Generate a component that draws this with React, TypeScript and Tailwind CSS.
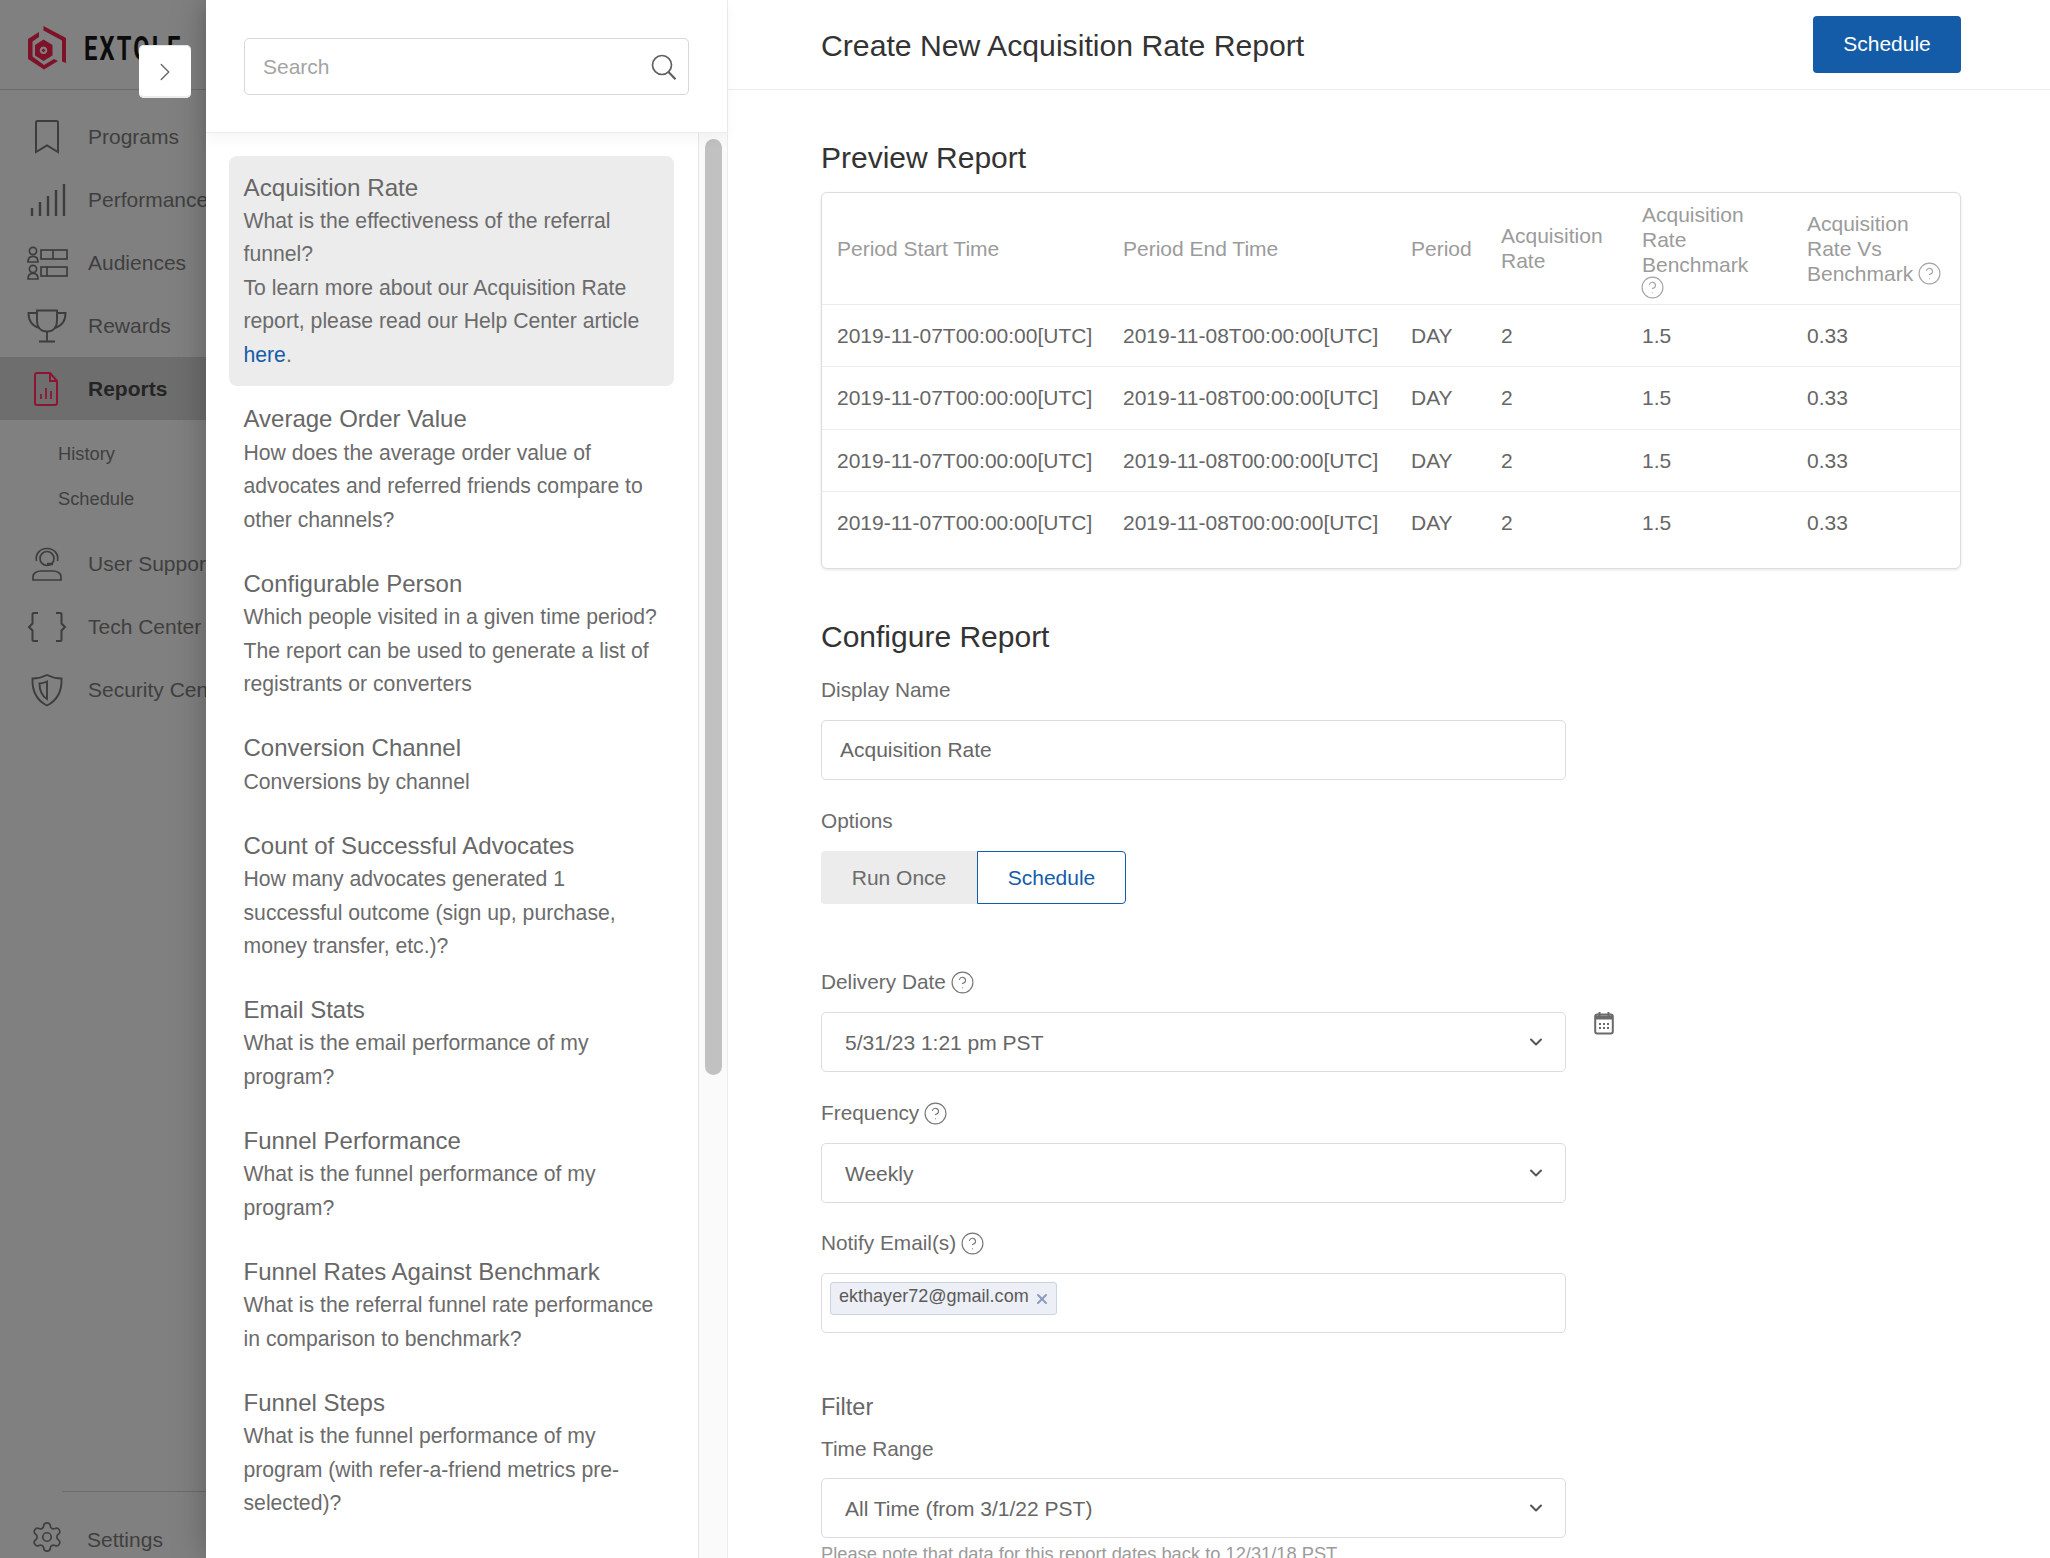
import { ChevronDown, ChevronRight, CircleHelp, Settings, X } from "lucide-react";

const reports = [
  { title: "Average Order Value", lines: ["How does the average order value of", "advocates and referred friends compare to", "other channels?"] },
  { title: "Configurable Person", lines: ["Which people visited in a given time period?", "The report can be used to generate a list of", "registrants or converters"] },
  { title: "Conversion Channel", lines: ["Conversions by channel"] },
  { title: "Count of Successful Advocates", lines: ["How many advocates generated 1", "successful outcome (sign up, purchase,", "money transfer, etc.)?"] },
  { title: "Email Stats", lines: ["What is the email performance of my", "program?"] },
  { title: "Funnel Performance", lines: ["What is the funnel performance of my", "program?"] },
  { title: "Funnel Rates Against Benchmark", lines: ["What is the referral funnel rate performance", "in comparison to benchmark?"] },
  { title: "Funnel Steps", lines: ["What is the funnel performance of my", "program (with refer-a-friend metrics pre-", "selected)?"] },
  { title: "Influencer Stats", lines: ["What is the influencer performance"] },
];

const rows = [0, 1, 2, 3];

function BookmarkIcon() {
  return (
    <svg width="42" height="34" viewBox="0 0 42 34" fill="none" stroke="#3d3d3d" strokeWidth="2">
      <path d="M10 2.5c0-1 .6-1.5 1.5-1.5h19c.9 0 1.5.5 1.5 1.5V32l-11-6.5L10 32z" />
    </svg>
  );
}

function BarsIcon() {
  return (
    <svg width="42" height="34" viewBox="0 0 42 34" fill="none" stroke="#3d3d3d" strokeWidth="2.4">
      <path d="M6 33v-8M14 33V19M22 33V13M30 33V7M38 33V1" />
    </svg>
  );
}

function AudienceIcon() {
  return (
    <svg width="42" height="34" viewBox="0 0 42 34" fill="none" stroke="#3d3d3d" strokeWidth="1.7">
      <circle cx="7" cy="5" r="3.6" />
      <path d="M2 16c0-3.4 2-5.6 5-5.6s5 2.2 5 5.6z" />
      <circle cx="7" cy="23" r="3.6" />
      <path d="M2 33c0-3.4 2-5.6 5-5.6s5 2.2 5 5.6z" />
      <rect x="15" y="4" width="26" height="9" />
      <path d="M27 4v9" />
      <rect x="15" y="21" width="26" height="9" />
      <path d="M21 21v9" />
    </svg>
  );
}

function TrophyIcon() {
  return (
    <svg width="42" height="34" viewBox="0 0 42 34" fill="none" stroke="#3d3d3d" strokeWidth="1.9">
      <path d="M11 1.5h20v10c0 7-4 11-10 11s-10-4-10-11z" />
      <path d="M11 4H2.500c0 8 3 13 11 15M31 4h8.500c0 8-3 13-11 15" />
      <path d="M21 22.500V32M13 32.500h16" />
    </svg>
  );
}

function ReportIcon() {
  return (
    <svg width="42" height="34" viewBox="0 0 42 34" fill="none" stroke="#8f1633" strokeWidth="2">
      <path d="M11 1h13l7 8v22c0 1.200-.8 2-2 2H11c-1.200 0-2-.8-2-2V3c0-1.200.8-2 2-2z" />
      <path d="M24 1v8h7" />
      <path d="M15 27v-5M20 27V16M25 27v-8" strokeWidth="1.8" />
    </svg>
  );
}

function SupportIcon() {
  return (
    <svg width="42" height="34" viewBox="0 0 42 34" fill="none" stroke="#3d3d3d" strokeWidth="1.7">
      <path d="M10.500 14C9 7 14 1.500 21 1.500S33 7 31.500 14" />
      <circle cx="21" cy="11.500" r="7" />
      <path d="M27 17h-6" strokeWidth="2.4" />
      <path d="M7 33v-3.500c0-3.500 4-5.500 8-5.500h12c4 0 8 2 8 5.500V33z" />
    </svg>
  );
}

function BracesIcon() {
  return (
    <svg width="42" height="34" viewBox="0 0 42 34" fill="none" stroke="#3d3d3d" strokeWidth="2">
      <path d="M12 3H8c-1 0-1.500.5-1.500 1.500v9L3 17l3.500 3.500v9c0 1 .5 1.500 1.500 1.500h4" />
      <path d="M30 3h4c1 0 1.500.5 1.500 1.500v9L39 17l-3.500 3.500v9c0 1-.5 1.500-1.500 1.500h-4" />
    </svg>
  );
}

function ShieldIcon() {
  return (
    <svg width="42" height="34" viewBox="0 0 42 34" fill="none" stroke="#3d3d3d" strokeWidth="1.900">
      <path d="M21 2c5 2.500 10 3.500 14.500 3.500C36 18 32 27 21 32.500 10 27 6 18 6.500 5.500 11 5.500 16 4.500 21 2z" />
      <path d="M21 8.500c-3 1.500-5 2-7.500 2 0 7 2.500 12.500 7.500 15.500z" />
    </svg>
  );
}

function CalendarIcon() {
  return (
    <svg width="20" height="24" viewBox="0 0 20 24" fill="none">
      <rect x="1.200" y="3.500" width="17.600" height="19" rx="2" stroke="#6a6a6a" strokeWidth="2" />
      <path d="M1 4.500h18v4H1z" fill="#6a6a6a" />
      <path d="M5.500 1v4M14.500 1v4" stroke="#6a6a6a" strokeWidth="2" />
      <path d="M5 12h2v2H5zM9 12h2v2H9zM13 12h2v2h-2zM5 16h2v2H5zM9 16h2v2H9zM13 16h2v2h-2z" fill="#6a6a6a" />
    </svg>
  );
}

function SearchIcon() {
  return (
    <svg width="26" height="26" viewBox="0 0 26 26" fill="none" stroke="#5f5f5f" strokeWidth="1.700">
      <circle cx="11" cy="11" r="9.500" />
      <path d="M17.500 18l7 7.200" strokeWidth="2.200" />
    </svg>
  );
}

function LogoMark() {
  return (
    <svg width="38" height="44" viewBox="0 0 38 44" className="shrink-0" fill="#7d1228">
      <path d="M15.500 0L38 12v25l-4-1.600V14.500L15.500 4.500z" />
      <path d="M11 6v5l-6.500 4.500v15L16 39l10-6 4 2-14 8.500L0 33V13z" />
      <path
        fillRule="evenodd"
        d="M15.500 13.500L24.500 19v10.500L15.500 35 7 29.500V19zM15.500 20.500a3.800 3.800 0 1 0 .01 0zM15.500 22.500l2 1.900-2 1.900-2-1.900z"
      />
    </svg>
  );
}

function NavItem({ icon, label, active }: { icon: React.ReactNode; label: string; active?: boolean }) {
  return (
    <div className={`flex h-[63px] items-center gap-[20px] pl-[26px] ${active ? "bg-[#6e6e6e] font-bold text-[#242424]" : "text-[#3f3f3f]"}`}>
      <span className="flex w-[42px] shrink-0 justify-center">{icon}</span>
      <span className="whitespace-nowrap">{label}</span>
    </div>
  );
}

function Sidebar() {
  return (
    <aside className="flex h-full w-[206px] shrink-0 flex-col overflow-hidden bg-[#808080] text-[21px]">
      <div className="flex h-[90px] shrink-0 items-start border-b border-[#6c6c6c] pl-[28px] pt-[26px]">
        <LogoMark />
        <span className="ml-[18px] mt-[9px] inline-block origin-left scale-x-[0.72] whitespace-nowrap text-[33px] font-bold leading-[28px] tracking-[3px] text-[#0c0c0c] [font-family:'Roboto',sans-serif]">
          EXTOLE
        </span>
      </div>
      <nav className="shrink-0 pt-[15px]">
        <NavItem icon={<BookmarkIcon />} label="Programs" />
        <NavItem icon={<BarsIcon />} label="Performance" />
        <NavItem icon={<AudienceIcon />} label="Audiences" />
        <NavItem icon={<TrophyIcon />} label="Rewards" />
        <NavItem icon={<ReportIcon />} label="Reports" active />
        <div className="pb-[11px] pt-[11px] text-[18.300px] text-[#3f3f3f]">
          <div className="flex h-[45px] items-center pl-[58px]">History</div>
          <div className="flex h-[45px] items-center pl-[58px]">Schedule</div>
        </div>
        <NavItem icon={<SupportIcon />} label="User Support" />
        <NavItem icon={<BracesIcon />} label="Tech Center" />
        <NavItem icon={<ShieldIcon />} label="Security Center" />
      </nav>
      <div className="mt-auto h-[67px] shrink-0">
        <div className="ml-[62px] h-px bg-[#6c6c6c]" />
        <div className="flex items-center gap-[23px] pl-[30px] pt-[31px] leading-[28px] text-[#3f3f3f]">
          <Settings size={34} strokeWidth={1.200} className="shrink-0 -translate-y-[3px]" />
          <span>Settings</span>
        </div>
      </div>
    </aside>
  );
}

function ReportPanel() {
  return (
    <section className="relative flex h-full w-[522px] shrink-0 flex-col border-r border-[#ececec] bg-white shadow-[0_0_32px_rgba(0,0,0,0.28)]">
      <div className="relative z-10 h-[133px] shrink-0 border-b border-[#ececec] bg-white pl-[38px] pt-[38px] shadow-[0_6px_14px_rgba(0,0,0,0.04)]">
        <div className="flex h-[57px] w-[445px] items-center justify-between rounded-[5px] border border-[#d8d8d8] pl-[18px] pr-[11px] text-[21px] text-[#a4a4a4]">
          <span>Search</span>
          <SearchIcon />
        </div>
      </div>
      <div className="flex min-h-0 flex-1">
        <div className="min-w-0 flex-1 overflow-hidden pl-[23px] pr-[24px] pt-[23px] text-[21.200px] leading-[33.500px] text-[#6b6b6b]">
          <div className="rounded-[8px] bg-[#ececec] pb-[15px] pl-[14.500px] pr-[14px] pt-[14px]">
            <div className="translate-y-[1px] text-[24.200px] text-[#676767]">Acquisition Rate</div>
            <div>What is the effectiveness of the referral</div>
            <div>funnel?</div>
            <div>To learn more about our Acquisition Rate</div>
            <div>report, please read our Help Center article</div>
            <div>
              <span className="text-[#155ba8]">here</span>.
            </div>
          </div>
          <div className="mt-[2.400px] flex flex-col gap-[2.400px]">
            {reports.map((r) => (
              <div key={r.title} className="whitespace-nowrap py-[14px] pl-[14.500px] pr-[14px]">
                <div className="text-[24px] text-[#676767]">{r.title}</div>
                {r.lines.map((l) => (
                  <div key={l}>{l}</div>
                ))}
              </div>
            ))}
          </div>
        </div>
        <div className="w-[29px] shrink-0 border-l border-[#e6e6e6] bg-[#fafafa] pl-[6px] pt-[6px]">
          <div className="h-[936px] w-[17px] rounded-full bg-[#c1c1c1]" />
        </div>
      </div>
    </section>
  );
}

function Label({ text, help }: { text: string; help?: boolean }) {
  return (
    <div className="flex h-[34px] items-center gap-[4px] text-[20.800px] text-[#6b6b6b]">
      {text}
      {help && <CircleHelp size={25} strokeWidth={1.100} className="text-[#777777]" />}
    </div>
  );
}

function SelectBox({ value }: { value: string }) {
  return (
    <div className="flex h-[60px] w-[745px] items-center justify-between rounded-[5px] border border-[#dcdcdc] pl-[23px] pr-[19px] text-[21px] text-[#666666]">
      <span className="pt-[2px]">{value}</span>
      <ChevronDown size={20} strokeWidth={2.400} className="text-[#555555]" />
    </div>
  );
}

function PreviewTable() {
  return (
    <div className="h-[377px] w-[1140px] overflow-hidden rounded-[6px] border border-[#dddddd] bg-white shadow-[0_1px_3px_rgba(0,0,0,0.1)]">
      <table className="w-full table-fixed border-collapse text-left text-[21px]">
        <colgroup>
          <col className="w-[286px]" />
          <col className="w-[288px]" />
          <col className="w-[90px]" />
          <col className="w-[141px]" />
          <col className="w-[165px]" />
          <col />
        </colgroup>
        <thead>
          <tr className="h-[111px] border-b border-[#ececec] leading-[25px] text-[#9b9b9b]">
            <th className="pl-[15px] font-normal">Period Start Time</th>
            <th className="pl-[15px] font-normal">Period End Time</th>
            <th className="pl-[15px] font-normal">Period</th>
            <th className="pl-[15px] pr-[8px] font-normal">Acquisition Rate</th>
            <th className="pl-[15px] pr-[8px] pt-[6px] font-normal">
              Acquisition Rate Benchmark
              <CircleHelp size={25} strokeWidth={1.100} className="-ml-[2px] -mt-[2px] text-[#a5a5a5]" />
            </th>
            <th className="pl-[15px] pr-[8px] font-normal">
              Acquisition Rate Vs
              <span className="flex items-center gap-[4px]">
                Benchmark
                <CircleHelp size={25} strokeWidth={1.100} className="text-[#a5a5a5]" />
              </span>
            </th>
          </tr>
        </thead>
        <tbody className="text-[#666666]">
          {rows.map((i) => (
            <tr key={i} className="h-[62.500px] border-b border-[#ececec] last:border-b-0">
              <td className="pl-[15px]">2019-11-07T00:00:00[UTC]</td>
              <td className="pl-[15px]">2019-11-08T00:00:00[UTC]</td>
              <td className="pl-[15px]">DAY</td>
              <td className="pl-[15px]">2</td>
              <td className="pl-[15px]">1.5</td>
              <td className="pl-[15px]">0.33</td>
            </tr>
          ))}
        </tbody>
      </table>
    </div>
  );
}

function MainContent() {
  return (
    <main className="relative z-[1] flex h-full min-w-0 flex-1 flex-col overflow-hidden bg-white">
      <header className="flex h-[90px] shrink-0 items-center justify-between border-b border-[#ececec] pl-[93px] pr-[89px]">
        <h1 className="translate-y-[1px] text-[30.200px] text-[#333333]">Create New Acquisition Rate Report</h1>
        <button className="-mt-[1px] h-[57px] w-[148px] rounded-[4px] bg-[#145ca8] text-[21px] text-white">Schedule</button>
      </header>
      <div className="pl-[93px] pr-[89px]">
        <h2 className="mt-[47px] h-[42px] text-[30px] leading-[42px] text-[#333333]">Preview Report</h2>
        <div className="mt-[13px]">
          <PreviewTable />
        </div>
        <h2 className="mt-[47px] h-[42px] text-[30px] leading-[42px] text-[#333333]">Configure Report</h2>
        <div className="mt-[15px]">
          <Label text="Display Name" />
        </div>
        <div className="mt-[13px] flex h-[60px] w-[745px] items-center rounded-[5px] border border-[#dcdcdc] pl-[18px] text-[21px] text-[#666666]">
          Acquisition Rate
        </div>
        <div className="mt-[24px]">
          <Label text="Options" />
        </div>
        <div className="mt-[13px] flex h-[53px] w-[305px] text-[21px]">
          <div className="flex w-[156px] items-center justify-center rounded-l-[4px] bg-[#ececec] text-[#6b6b6b]">Run Once</div>
          <div className="flex flex-1 items-center justify-center rounded-r-[4px] border border-[#145ca8] text-[#145ca8]">Schedule</div>
        </div>
        <div className="mt-[61px]">
          <Label text="Delivery Date" help />
        </div>
        <div className="mt-[13px] flex items-start gap-[28px]">
          <SelectBox value="5/31/23 1:21 pm PST" />
          <span className="-mt-[1px]">
            <CalendarIcon />
          </span>
        </div>
        <div className="mt-[24px]">
          <Label text="Frequency" help />
        </div>
        <div className="mt-[13px]">
          <SelectBox value="Weekly" />
        </div>
        <div className="mt-[23px]">
          <Label text="Notify Email(s)" help />
        </div>
        <div className="mt-[13px] h-[60px] w-[745px] rounded-[5px] border border-[#dcdcdc] pl-[8px] pt-[8px]">
          <div className="flex h-[33px] w-[227px] items-center justify-between rounded-[3px] border border-[#c9d3e4] bg-[#eceff5] pl-[8px] pr-[6px] text-[18.050px] text-[#5a5a5a]">
            <span className="-translate-y-[2px]">ekthayer72@gmail.com</span>
            <X size={16} strokeWidth={3} className="text-[#8a9bbd]" />
          </div>
        </div>
        <div className="mt-[57px] h-[34px] text-[23.500px] leading-[34px] text-[#666666]">Filter</div>
        <div className="mt-[8px]">
          <Label text="Time Range" />
        </div>
        <div className="mt-[12px]">
          <SelectBox value="All Time (from 3/1/22 PST)" />
        </div>
        <div className="mt-[4px] text-[18.300px] leading-[24px] text-[#9b9b9b]">
          Please note that data for this report dates back to 12/31/18 PST.
        </div>
      </div>
    </main>
  );
}

export default function App() {
  return (
    <div className="relative flex h-[1558px] w-[2050px] overflow-hidden bg-white [font-family:'Liberation_Sans',Arial,sans-serif]">
      <Sidebar />
      <ReportPanel />
      <MainContent />
      <button className="absolute left-[139px] top-[45px] z-20 flex h-[53px] w-[52px] items-center justify-center rounded-[5px] bg-white shadow-[0_1px_0_#e4e4e4_inset,0_-2px_0_#ececec_inset]">
        <ChevronRight size={30} strokeWidth={1.100} className="text-[#666666]" />
      </button>
    </div>
  );
}
